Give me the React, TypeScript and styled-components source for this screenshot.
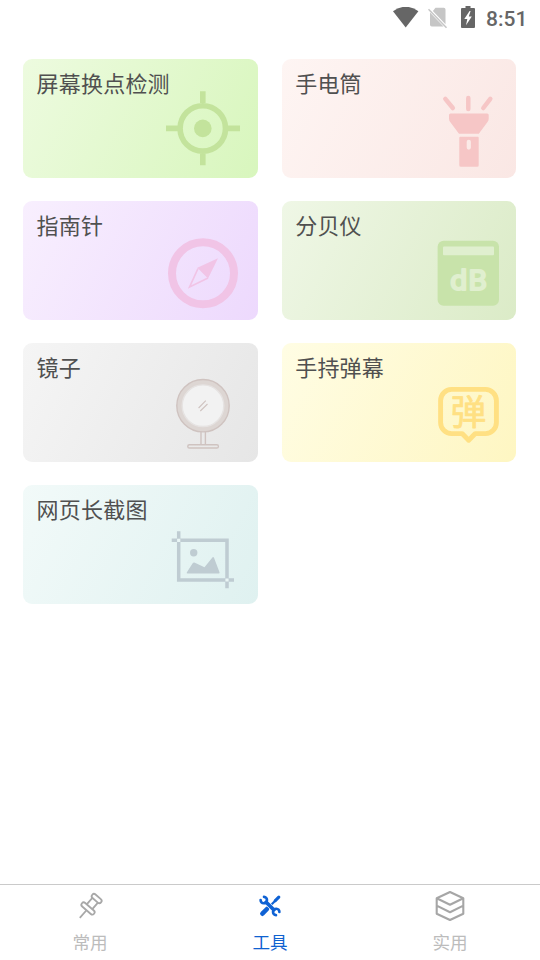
import React from "react";
import styled, { createGlobalStyle } from "styled-components";

const GlobalStyle = createGlobalStyle`
  * { box-sizing: border-box; }
  body {
    margin: 0;
    background: #ffffff;
    font-family: "Noto Sans CJK SC", "Noto Sans", sans-serif;
  }
`;

const Screen = styled.div`
  display: flex;
  flex-direction: column;
  width: 540px;
  height: 960px;
  background: #ffffff;
  overflow: hidden;
`;

const StatusBar = styled.header`
  display: flex;
  align-items: center;
  justify-content: flex-end;
  height: 36px;
  padding-right: 13px;
`;

const StatusIcon = styled.svg<{ $gap: number }>`
  flex: none;
  margin-right: ${(p) => p.$gap}px;
`;

const Clock = styled.span`
  width: 41px;
  font: 500 21px/24px Roboto, sans-serif;
  color: #666666;
  white-space: nowrap;
  padding-top: 2px;
`;

const ToolGrid = styled.main`
  flex: 1;
  display: grid;
  grid-template-columns: 235px 234px;
  grid-auto-rows: 119px;
  column-gap: 24px;
  row-gap: 23px;
  align-content: start;
  padding: 23px 24px 0 23px;
`;

const Card = styled.section<{ $from: string; $to: string }>`
  display: grid;
  border-radius: 9px;
  background: linear-gradient(116.9deg, ${(p) => p.$from}, ${(p) => p.$to});
`;

const CardTitle = styled.h2<{ $indent: number }>`
  grid-area: 1 / 1;
  margin: 7px 0 0 ${(p) => p.$indent}px;
  font-size: 22px;
  line-height: 32px;
  font-weight: 400;
  letter-spacing: 0.2px;
  color: #505050;
`;

const CardIcon = styled.svg<{ $inset: number }>`
  grid-area: 1 / 1;
  justify-self: end;
  align-self: end;
  width: 80px;
  height: 80px;
  margin: 0 ${(p) => p.$inset}px 8px 0;
`;

const TabBar = styled.nav`
  display: grid;
  grid-template-columns: repeat(3, 1fr);
  height: 76px;
  border-top: 1px solid #cacaca;
`;

const Tab = styled.div<{ $active?: boolean }>`
  display: flex;
  flex-direction: column;
  align-items: center;
  padding-top: 5px;
  color: ${(p) => (p.$active ? "#0f62d0" : "#bcbcbc")};
`;

const TabLabel = styled.span`
  margin-top: 8px;
  font-size: 17.6px;
  line-height: 24px;
`;

const Crosshair = () => (
  <g fill="none" stroke="#c3e39c" strokeWidth="5.6">
    <circle cx="39.8" cy="38.4" r="22.7" />
    <path d="M3 38.4H15M65 38.4H77M39.8 1.3V13M39.8 63.5V75.3" />
    <circle cx="39.8" cy="38.4" r="8.8" fill="#c3e39c" stroke="none" />
  </g>
);

const Flashlight = () => (
  <g fill="#f6c6c6">
    <path d="M22.5 23.5H59.2Q60.7 23.5 60.7 25V28.5Q60.7 30.5 59.5 32L50.8 43.7H31L22.2 32Q21 30.5 21 28.5V25Q21 23.5 22.5 23.5Z" />
    <path
      fillRule="evenodd"
      d="M32.3 46.7H49.7Q50.7 46.7 50.7 47.7V75.2Q50.7 76.7 49.2 76.7H32.8Q31.3 76.7 31.3 75.2V47.7Q31.3 46.7 32.3 46.7ZM40.8 49.7A2.1 2.1 0 0 0 38.7 51.8V57.6A2.1 2.1 0 0 0 42.9 57.6V51.8A2.1 2.1 0 0 0 40.8 49.7Z"
    />
    <path
      d="M40.3 8V19M17.3 8.9L24.8 18M62.3 8.9L55.3 18"
      stroke="#f6c6c6"
      strokeWidth="4.5"
      strokeLinecap="round"
    />
  </g>
);

const Compass = () => (
  <g fill="none" stroke="#f1c4e6">
    <circle cx="40" cy="41.3" r="31" strokeWidth="8" />
    <path d="M35 36.5L26.6 54.9L45 46" strokeWidth="1.7" />
    <path d="M55 26.3L34.3 35.7L45 46.5Z" fill="#f1c4e6" stroke="none" />
  </g>
);

const SoundMeter = () => (
  <g>
    <rect x="9.6" y="8.7" width="61.4" height="65" rx="6" fill="#c8e3aa" />
    <rect x="15" y="14.4" width="51" height="8.8" rx="1" fill="#e0efcf" />
    <g
      fontFamily="Roboto, sans-serif"
      fontSize="27"
      fontWeight="400"
      fill="#e0efcf"
      stroke="#e0efcf"
      strokeWidth="2"
      strokeLinejoin="round"
    >
      <text x="22.3" y="58" textLength="17" lengthAdjust="spacingAndGlyphs">
        d
      </text>
      <text x="40.6" y="58" textLength="18.5" lengthAdjust="spacingAndGlyphs">
        B
      </text>
    </g>
  </g>
);

const Mirror = () => (
  <g fill="none" stroke="#cfc3c0" strokeWidth="1.4">
    <path d="M38 58V70.6M42.4 58V70.6" />
    <rect x="24.8" y="70.7" width="30.6" height="3.3" rx="1.6" />
    <circle cx="40" cy="31.7" r="26.2" fill="#ddd6d3" />
    <circle cx="40" cy="31.7" r="20.8" fill="#f2f2f2" stroke="#e6e3e2" />
    <path d="M35.6 34L42.8 26.7M37.3 37L44.5 30" strokeWidth="1.1" />
  </g>
);

const Danmaku = () => (
  <g>
    <path
      d="M23.5 15.4H57.5A11 11 0 0 1 68.4 26.4V48.6A11 11 0 0 1 57.5 59.6H47.3L40.7 66.2L34.1 59.6H23.5A11 11 0 0 1 12.6 48.6V26.4A11 11 0 0 1 23.5 15.4Z"
      fill="none"
      stroke="#ffe083"
      strokeWidth="4.9"
      strokeLinejoin="round"
    />
    <text
      x="22.8"
      y="50.7"
      fontFamily="'Noto Sans CJK SC', sans-serif"
      fontSize="35.5"
      fontWeight="400"
      fill="#ffe083"
      stroke="#ffe083"
      strokeWidth="0.7"
      strokeLinejoin="round"
    >
      弹
    </text>
  </g>
);

const CropImage = () => (
  <g fill="#bfccd2">
    <path
      d="M8.7 24.3H64V72.3M15.7 15.3V64H71"
      fill="none"
      stroke="#bfccd2"
      strokeWidth="3.5"
    />
    <path d="M14.1 22.7H17.3V25.9H14.1ZM62.4 62.4H65.6V65.6H62.4Z" fill="#e9f6f5" />
    <circle cx="30.7" cy="36.7" r="3.7" />
    <path d="M24.6 57.5Q23.2 57.5 23.9 56.2L29.5 47.6Q30.4 46.2 31.9 46.8L41.5 51.3L49.2 41.7Q50.3 40.3 51.1 42L56.5 56.2Q56.9 57.5 55.8 57.5Z" />
  </g>
);

const PinIcon = () => (
  <svg width="32" height="32" viewBox="0 0 32 32">
    <g
      transform="translate(22.6 8.6) rotate(41)"
      fill="none"
      stroke="#a8a8a8"
      strokeWidth="1.8"
    >
      <path d="M-3.7 2.2V10.8M3.7 2.2V10.8M0 15.4V25.6" />
      <rect x="-5.8" y="-2.4" width="11.6" height="4.6" rx="2.3" />
      <rect x="-8" y="10.8" width="16" height="4.6" rx="2.3" />
    </g>
  </svg>
);

const ToolsIcon = () => (
  <svg width="32" height="32" viewBox="0 0 32 32">
    <g fill="none" stroke="#0f62d4" strokeLinecap="round">
      <path d="M17.5 14.5L21.5 10.5" strokeWidth="2.2" />
      <path d="M21.3 10.7L24.8 7.2" strokeWidth="3.1" />
      <path d="M13 19L8.4 23.7" strokeWidth="4.6" />
      <path d="M12.5 12.5L19.8 19.8" stroke="#ffffff" strokeWidth="4.8" strokeLinecap="butt" />
      <path d="M11 11L21 21" strokeWidth="3.8" strokeLinecap="butt" />
      <path
        d="M6.6 10A3.2 3.2 0 1 0 10 6.9M25.4 22A3.2 3.2 0 1 0 22 25.1"
        strokeWidth="2.6"
      />
    </g>
  </svg>
);

const LayersIcon = () => (
  <svg width="32" height="32" viewBox="0 0 32 32">
    <path
      d="M16 2L29.3 8.3V23.7L16 30L2.7 23.7V8.3ZM2.7 8.3L16 14.8L29.3 8.3M2.7 15.6L16 22.3L29.3 15.6"
      fill="none"
      stroke="#a6a6a6"
      strokeWidth="2.1"
      strokeLinejoin="round"
    />
  </svg>
);

const tools = [
  { title: "屏幕换点检测", from: "#edfbdf", to: "#d8f6bd", Icon: Crosshair },
  { title: "手电筒", from: "#fef5f3", to: "#fae7e4", Icon: Flashlight },
  { title: "指南针", from: "#f8effe", to: "#edd9fd", Icon: Compass },
  { title: "分贝仪", from: "#eff7e6", to: "#dbebc7", Icon: SoundMeter },
  { title: "镜子", from: "#f5f5f5", to: "#e6e6e6", Icon: Mirror },
  { title: "手持弹幕", from: "#fffde4", to: "#fef6c2", Icon: Danmaku },
  { title: "网页长截图", from: "#f2faf9", to: "#dff1f0", Icon: CropImage },
];

const tabs = [
  { label: "常用", Icon: PinIcon },
  { label: "工具", Icon: ToolsIcon, active: true },
  { label: "实用", Icon: LayersIcon },
];

export default function App() {
  return (
    <>
      <GlobalStyle />
      <Screen>
        <StatusBar>
          <StatusIcon $gap={9} width="26" height="22" viewBox="0 0 26 22">
            <path d="M12.7 20.5L0 4.2Q5.3 -0.2 12.7 -0.2T25.4 4.2Z" fill="#666666" />
          </StatusIcon>
          <StatusIcon $gap={13} width="20" height="22" viewBox="0 0 20 22">
            <path
              d="M7.5 0.8H15.7Q17.5 0.8 17.5 2.6V17.2L4.9 4.1ZM2 5.6L15.5 19.6H3.8Q2 19.6 2 17.8Z"
              fill="#c6c6c6"
            />
            <path d="M0.5 2.2L18.5 20.8" stroke="#c6c6c6" strokeWidth="1.5" />
          </StatusIcon>
          <StatusIcon $gap={11} width="14" height="24" viewBox="0 0 14 24">
            <path
              fillRule="evenodd"
              d="M4.5 0H9.5V2H13Q14 2 14 3V21Q14 22 13 22H1Q0 22 0 21V3Q0 2 1 2H4.5ZM8.6 5L3.3 13H6.3L5 19.2L10.8 10.6H7.8L9.6 5Z"
              fill="#666666"
            />
          </StatusIcon>
          <Clock>8:51</Clock>
        </StatusBar>
        <ToolGrid>
          {tools.map(({ title, from, to, Icon }, i) => (
            <Card key={title} $from={from} $to={to}>
              <CardTitle $indent={i % 2 === 0 ? 13.6 : 13.2}>{title}</CardTitle>
              <CardIcon $inset={i % 2 === 0 ? 15 : 8} viewBox="0 0 80 80">
                <Icon />
              </CardIcon>
            </Card>
          ))}
        </ToolGrid>
        <TabBar>
          {tabs.map(({ label, Icon, active }) => (
            <Tab key={label} $active={active}>
              <Icon />
              <TabLabel>{label}</TabLabel>
            </Tab>
          ))}
        </TabBar>
      </Screen>
    </>
  );
}
